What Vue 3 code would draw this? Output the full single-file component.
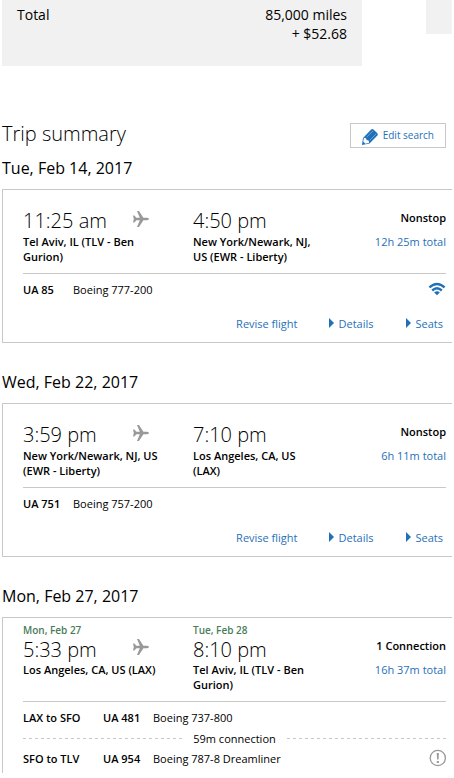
<script setup>
const trips = [
  {
    date: 'Tue, Feb 14, 2017',
    depart: { time: '11:25 am', place: 'Tel Aviv, IL (TLV - Ben Gurion)' },
    arrive: { time: '4:50 pm', place: 'New York/Newark, NJ, US (EWR - Liberty)' },
    stops: 'Nonstop',
    total: '12h 25m total',
    segments: [{ flight: 'UA 85', plane: 'Boeing 777-200', icon: 'wifi' }],
    actions: true
  },
  {
    date: 'Wed, Feb 22, 2017',
    depart: { time: '3:59 pm', place: 'New York/Newark, NJ, US (EWR - Liberty)' },
    arrive: { time: '7:10 pm', place: 'Los Angeles, CA, US (LAX)' },
    stops: 'Nonstop',
    total: '6h 11m total',
    segments: [{ flight: 'UA 751', plane: 'Boeing 757-200' }],
    actions: true
  },
  {
    date: 'Mon, Feb 27, 2017',
    depart: { day: 'Mon, Feb 27', time: '5:33 pm', place: 'Los Angeles, CA, US (LAX)' },
    arrive: { day: 'Tue, Feb 28', time: '8:10 pm', place: 'Tel Aviv, IL (TLV - Ben Gurion)' },
    stops: '1 Connection',
    total: '16h 37m total',
    segments: [
      { route: 'LAX to SFO', flight: 'UA 481', plane: 'Boeing 737-800', layover: '59m connection' },
      { route: 'SFO to TLV', flight: 'UA 954', plane: 'Boeing 787-8 Dreamliner', icon: 'alert' }
    ],
    actions: false
  }
]
</script>

<template>
  <main class="page">
    <div class="top">
      <section class="fare">
        <span>Total</span>
        <span class="price">85,000 miles<br />+ $52.68</span>
      </section>
      <aside class="side"></aside>
    </div>

    <header class="heading">
      <h1>Trip summary</h1>
      <button type="button" class="edit">
        <svg width="18" height="18" viewBox="0 0 18 18" aria-hidden="true">
          <path d="M1 17 2 10 10.2 1.6Q11.3.5 12.4 1.5L16.2 5.1Q17.4 6.3 16.4 7.5L8.5 15.4Z" fill="#1f70b9" />
          <path d="M3 9.8 5 10.3 5.6 12.1 7.6 12.6 8.2 14.7 4.4 15.8 2.2 13.6Z" fill="#fff" />
          <path d="M5.6 9.2 12 2.9M8.7 12.3 15.2 5.8" stroke="#8dbbe2" stroke-width=".7" fill="none" />
        </svg>
        Edit search
      </button>
    </header>

    <section v-for="trip in trips" :key="trip.date" class="trip">
      <h2>{{ trip.date }}</h2>
      <article class="card" :class="{ open: !trip.actions }">
        <div class="leg" :class="{ dated: trip.depart.day }">
          <div class="stop depart">
            <span v-if="trip.depart.day" class="day">{{ trip.depart.day }}</span>
            <div class="time">
              {{ trip.depart.time }}
              <svg class="plane" width="18" height="18" viewBox="0 0 18 18" aria-hidden="true">
                <path d="M1 5.6H2.3L4.4 7.8H7.8L5 1H7L11.4 7.8H15Q17 8 17 9T15 10.2H11.4L7 17H5L7.8 10.2H4.4L2.3 12.4H1L1.8 9Z" fill="#999" />
              </svg>
            </div>
            <div class="place">{{ trip.depart.place }}</div>
          </div>
          <div class="stop arrive">
            <span v-if="trip.arrive.day" class="day">{{ trip.arrive.day }}</span>
            <div class="time">{{ trip.arrive.time }}</div>
            <div class="place">{{ trip.arrive.place }}</div>
          </div>
          <div class="duration">
            <strong>{{ trip.stops }}</strong>
            <a href="#">{{ trip.total }}</a>
          </div>
        </div>

        <div class="segments">
          <template v-for="seg in trip.segments" :key="seg.flight">
            <div class="segment">
              <strong v-if="seg.route" class="route">{{ seg.route }}</strong>
              <strong class="flight">{{ seg.flight }}</strong>
              <span class="aircraft">{{ seg.plane }}</span>
              <svg v-if="seg.icon === 'wifi'" width="18" height="14" viewBox="0 0 18 14" role="img" aria-label="Wi-Fi">
                <g fill="none" stroke="#1f70b9" stroke-width="2.4">
                  <path d="M1.4 5.4Q9-1.6 16.6 5.4" />
                  <path d="M4.2 8.5Q9 4.2 13.8 8.5" />
                </g>
                <path d="M6.2 10.4Q9 8 11.8 10.4L9 13.2Z" fill="#1f70b9" />
              </svg>
              <svg v-if="seg.icon === 'alert'" width="18" height="18" viewBox="0 0 18 18" role="img" aria-label="Notice">
                <circle cx="9.8" cy="9" r="7.6" fill="none" stroke="#999" stroke-width="1.3" />
                <path d="M8.7 4H10.9L10.5 10.5H9.1ZM8.8 12H10.8V14H8.8Z" fill="#999" />
              </svg>
            </div>
            <div v-if="seg.layover" class="layover"><span>{{ seg.layover }}</span></div>
          </template>
        </div>

        <nav v-if="trip.actions" class="actions">
          <a href="#">Revise flight</a>
          <a href="#" class="toggle">Details</a>
          <a href="#" class="toggle">Seats</a>
        </nav>
      </article>
    </section>
  </main>
</template>

<style>
body {
  margin: 0;
  background: #fff;
}
</style>

<style scoped>
.page {
  padding: 0 2px;
  color: #000;
  font: 11px/15px "Open Sans", sans-serif;
}
.top {
  display: flex;
  justify-content: space-between;
  align-items: flex-start;
}
.fare {
  box-sizing: border-box;
  width: 80%;
  height: 66px;
  padding: 5px 15px;
  display: flex;
  justify-content: space-between;
  background: #f1f1f1;
  font-size: 14px;
  line-height: 19px;
}
.price {
  text-align: right;
}
.side {
  width: 26px;
  height: 34px;
  background: #f1f1f1;
}
.heading {
  display: flex;
  justify-content: space-between;
  align-items: center;
  margin-top: 52px;
  padding-right: 6px;
  height: 34px;
}
h1 {
  margin: 0;
  padding-bottom: 2px;
  font-size: 20px;
  line-height: 28px;
  font-weight: 300;
}
h2 {
  margin: 0;
  font-size: 16px;
  line-height: 22px;
  font-weight: 400;
}
.edit {
  display: flex;
  align-items: center;
  gap: 4px;
  height: 25px;
  padding: 0 11px 0 10px;
  border: 1px solid #c8c8c8;
  background: #fff;
  color: #1f70b9;
  font: 10px/14px "Open Sans", sans-serif;
}
.edit svg {
  margin-top: 3px;
}
.trip {
  padding-top: 5px;
}
.trip + .trip {
  padding-top: 28px;
}
.card {
  margin-top: 10px;
  padding: 0 6px 11px 20px;
  border: 1px solid #c8c8c8;
  border-right: 0;
}
.card.open {
  border-bottom: 0;
  padding-bottom: 6px;
}
.leg {
  display: flex;
  padding: 17px 0 9px;
  border-bottom: 1px solid #c8c8c8;
}
.leg.dated {
  padding-top: 6px;
}
.stop {
  box-sizing: border-box;
  flex-shrink: 0;
}
.depart {
  width: 170px;
  padding-right: 32px;
}
.arrive {
  width: 126px;
}
.day {
  display: block;
  color: #4a7c59;
  font-size: 10px;
  line-height: 13px;
  font-weight: 600;
}
.time {
  display: flex;
  justify-content: space-between;
  font-size: 20px;
  line-height: 27px;
  font-weight: 300;
}
.dated .time {
  line-height: 25px;
}
.plane {
  flex-shrink: 0;
  margin: 3px 11px 0 0;
}
.dated .plane {
  margin-top: 1px;
}
.place,
strong {
  font-weight: 600;
}
.duration {
  flex: 1;
  display: flex;
  flex-direction: column;
  gap: 9px;
  padding-top: 3px;
  text-align: right;
}
.dated .duration {
  padding-top: 14px;
}
a {
  color: #1f70b9;
  text-decoration: none;
}
.segments {
  padding-top: 6px;
}
.segment {
  display: flex;
  align-items: center;
  height: 18px;
}
.route {
  width: 80px;
}
.flight {
  width: 50px;
}
.aircraft {
  flex: 1;
}
.layover {
  display: flex;
  align-items: center;
  gap: 11px;
  padding: 5px 0 3px;
}
.layover::before,
.layover::after {
  content: "";
  flex: 1;
  height: 1px;
  background: repeating-linear-gradient(90deg, #c8c8c8 0 3px, transparent 3px 6px);
}
.actions {
  display: flex;
  justify-content: flex-end;
  gap: 31px;
  margin-top: 18px;
  padding-right: 3px;
}
.toggle + .toggle {
  margin-left: 1px;
}
.toggle::before {
  content: "";
  display: inline-block;
  margin-right: 5px;
  border-left: 5px solid #1f70b9;
  border-top: 5px solid transparent;
  border-bottom: 5px solid transparent;
}
</style>
